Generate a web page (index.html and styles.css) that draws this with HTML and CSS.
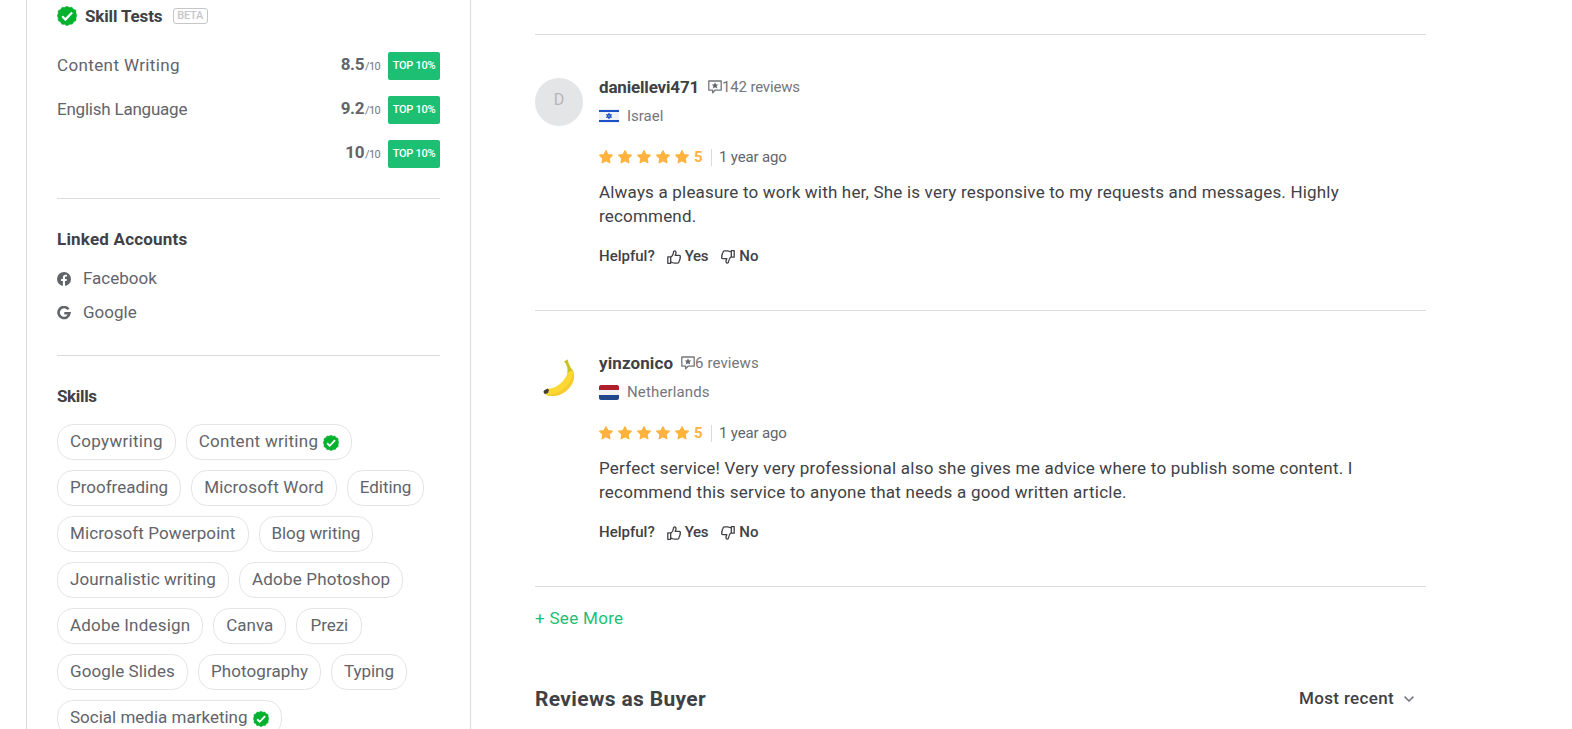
FILE: index.html
```html
<!DOCTYPE html>
<html>
  <head>
    <meta charset="utf-8" />
    <title>Seller Profile</title>
    <link rel="stylesheet" href="styles.css">
  </head>

  <body>
    <svg class="defs">
      <symbol id="verified" viewBox="0 0 20 20">
        <path fill="#00b22d" stroke="#00b22d" stroke-width=".6" stroke-linejoin="round" d="M10 .3l2.300 1.200 2.600-.3 1.500 2.100 2.400 1 .1 2.600L19.700 9.600l-.8 2.300.1 2.600-2.300 1.300-1.300 2.300-2.600.1L10 19.700l-2.400-1.500-2.700.1-1.300-2.400-2.400-1.300.1-2.600L.3 9.700l1-2.400-.1-2.600 2.400-1.200L5 1.400l2.600.1z"/>
        <path fill="none" stroke="#fff" stroke-width="2.300" d="M5.200 10.300l3.200 3.200 6.700-7"/>
      </symbol>
      <symbol id="star" viewBox="0 0 14 14">
        <path fill="#ffb33e" stroke="#ffb33e" stroke-width="1.200" stroke-linejoin="round" d="M7 .7l1.900 3.900 4.400.6-3.200 3.100.8 4.500L7 10.700l-3.900 2.100.8-4.500L.7 5.200l4.400-.6z"/>
      </symbol>
      <symbol id="bubble" viewBox="0 0 14 14">
        <path fill="none" stroke="#74767e" stroke-width="1.300" stroke-linejoin="round" d="M.8 1h12.400v9.200H7l-2.400 2.600v-2.600H.8z"/>
        <path fill="#62646a" d="M7 2.200l1 2.200 2.400.2-1.800 1.500.6 2.400L7 7.200 4.800 8.500l.6-2.400-1.800-1.500 2.400-.2z"/>
      </symbol>
      <symbol id="thumb" viewBox="0 0 14 14">
        <path fill="none" stroke="#404145" stroke-width="1.300" stroke-linejoin="round" d="M.8 6.800h2.900v6.500H.8zM3.700 7.400C5.500 6 6.300 4.600 6.500 2.200c.1-1.800 2.400-1.700 2.500.2 0 1.200-.3 2-.8 3h3.900c1.300 0 1.500 1.200.9 1.900.5.8.3 1.500-.3 2 .2.900-.1 1.500-.7 1.900.1 1.200-.5 1.900-1.600 1.900H7.600c-1.500 0-2.400-.7-3.900-1.100z"/>
      </symbol>
    </svg>

    <div class="page">
      <div class="sidebar">
        <div class="section tests">
          <h3 class="title">
            <svg class="badge"><use href="#verified"/></svg>
            <span>Skill Tests</span>
            <span class="beta">BETA</span>
          </h3>
          <div class="test"><span class="name cw">Content Writing</span><b>8.5</b><small>/10</small><span class="top">TOP 10%</span></div>
          <div class="test"><span class="name el">English Language</span><b>9.2</b><small>/10</small><span class="top">TOP 10%</span></div>
          <div class="test"><span class="name"></span><b>10</b><small>/10</small><span class="top">TOP 10%</span></div>
        </div>

        <div class="section accounts">
          <h3 class="title">Linked Accounts</h3>
          <div class="account">
            <svg viewBox="0 0 14 14">
              <circle cx="7" cy="7" r="7" fill="#62646a"/>
              <path fill="#fff" d="M5.900 14V9H4.100V7h1.800V5.500c0-1.800 1-2.800 2.700-2.800.7 0 1.400.1 1.400.1v1.600h-.9c-.8 0-1.100.5-1.100 1.100V7h1.900l-.3 2H8v5z"/>
            </svg>
            <span>Facebook</span>
          </div>
          <div class="account">
            <svg viewBox="0 0 14 14">
              <path fill="none" stroke="#62646a" stroke-width="2.600" d="M11.500 3.300A5.500 5.500 0 1 0 12.500 7.200H7.300"/>
            </svg>
            <span>Google</span>
          </div>
        </div>

        <div class="section">
          <h3 class="title skills-title">Skills</h3>
          <div class="skills">
            <span class="pill wide">Copywriting</span>
            <span class="pill wide">Content writing<svg class="check"><use href="#verified"/></svg></span>
            <span class="pill tight">Proofreading</span>
            <span class="pill mid">Microsoft Word</span>
            <span class="pill tighter">Editing</span>
            <span class="pill">Microsoft Powerpoint</span>
            <span class="pill tighter">Blog writing</span>
            <span class="pill">Journalistic writing</span>
            <span class="pill mid">Adobe Photoshop</span>
            <span class="pill mid">Adobe Indesign</span>
            <span class="pill tight">Canva</span>
            <span class="pill tighter">Prezi</span>
            <span class="pill">Google Slides</span>
            <span class="pill">Photography</span>
            <span class="pill tighter">Typing</span>
            <span class="pill tight">Social media marketing<svg class="check"><use href="#verified"/></svg></span>
          </div>
        </div>
      </div>

      <div class="main">
        <div class="review">
          <div class="avatar letter">D</div>
          <div class="body">
            <div class="user">
              <b class="daniel">daniellevi471</b>
              <svg><use href="#bubble"/></svg>
              <span>142 reviews</span>
            </div>
            <div class="country">
              <svg class="flag" viewBox="0 0 20 14">
                <path fill="#eef1f6" d="M0 0h20v14H0z"/>
                <path fill="#1c4fc4" d="M0 1h20v2H0zM0 11h20v2H0z"/>
                <path fill="none" stroke="#1c4fc4" stroke-width="1.200" d="M10 4.600l2.100 3.600H7.900zM10 9.400L7.900 5.800h4.200z"/>
              </svg>
              <span>Israel</span>
            </div>
            <div class="rating">
              <svg><use href="#star"/></svg>
              <svg><use href="#star"/></svg>
              <svg><use href="#star"/></svg>
              <svg><use href="#star"/></svg>
              <svg><use href="#star"/></svg>
              <b>5</b>
              <span class="time">1 year ago</span>
            </div>
            <p class="first">Always a pleasure to work with her, She is very responsive to my requests and messages. Highly recommend.</p>
            <div class="helpful">
              <span class="ask">Helpful?</span>
              <svg><use href="#thumb"/></svg><span class="yes">Yes</span>
              <svg class="down"><use href="#thumb"/></svg><span>No</span>
            </div>
          </div>
        </div>

        <div class="review">
          <svg class="avatar" viewBox="0 0 48 48">
            <path fill="#fdd835" d="M33 15.500c2-.5 4-.3 5 1 2.500 5 1 11.500-3 16.500-5 6-11 9-17.500 9-3.500 0-6.500-.8-8-2.300l3-5C18 35 24 31.500 28 27c3-3.500 4.500-7 5-11.500z"/>
            <path fill="#f6cb2f" d="M38.300 18c1.600 4.500.2 10.500-3.300 15-5 6-11 9-17.500 9-2.500 0-4.500-.4-6-1.100C22 40.500 35.500 34 38.300 18z"/>
            <path fill="#c9c41d" d="M29 7.300l3.800-1.800c.4 4 2 7 5.500 11.800l-2.200-.5-3.600 2.200c.5-5-.8-8.500-3.500-11.700z"/>
            <path fill="#443d38" d="M9 36.500l3.500-2 1.500 1.500-1 2.900-3.200 1c-1.300-.9-1.500-2.400-.8-3.400z"/>
          </svg>
          <div class="body">
            <div class="user">
              <b class="yin">yinzonico</b>
              <svg><use href="#bubble"/></svg>
              <span class="six">6 reviews</span>
            </div>
            <div class="country nl">
              <svg class="flag" viewBox="0 0 20 15">
                <path fill="#ae1f2b" d="M0 0h20v5H0z"/>
                <path fill="#f0f2f5" d="M0 5h20v5H0z"/>
                <path fill="#21468b" d="M0 10h20v5H0z"/>
              </svg>
              <span>Netherlands</span>
            </div>
            <div class="rating">
              <svg><use href="#star"/></svg>
              <svg><use href="#star"/></svg>
              <svg><use href="#star"/></svg>
              <svg><use href="#star"/></svg>
              <svg><use href="#star"/></svg>
              <b>5</b>
              <span class="time">1 year ago</span>
            </div>
            <p>Perfect service! Very very professional also she gives me advice where to publish some content. I recommend this service to anyone that needs a good written article.</p>
            <div class="helpful">
              <span class="ask">Helpful?</span>
              <svg><use href="#thumb"/></svg><span class="yes">Yes</span>
              <svg class="down"><use href="#thumb"/></svg><span>No</span>
            </div>
          </div>
        </div>

        <div class="more">+ See More</div>
        <div class="buyer">
          <h2>Reviews as Buyer</h2>
          <div class="sort">
            <span>Most recent</span>
            <svg viewBox="0 0 10 6"><path fill="none" stroke="#74767e" stroke-width="1.500" d="M.6.6L5 5 9.400.6"/></svg>
          </div>
        </div>
      </div>
    </div>
  </body>
</html>
```
FILE: styles.css
```css
* {
  box-sizing: border-box;
}

body {
  margin: 0;
  height: 729px;
  overflow: hidden;
  background: #fff;
  color: #62646a;
  font: 17px/24px Roboto, sans-serif;
}

svg {
  display: block;
  flex: none;
}

.defs {
  display: none;
}

.page {
  display: flex;
  gap: 64px;
  height: 729px;
  padding-left: 26px;
  overflow: hidden;
}

/* left column */
.sidebar {
  flex: none;
  width: 445px;
  padding: 0 30px;
  border: solid #dadbdd;
  border-width: 0 1px;
}

.section {
  border-bottom: 1px solid #dadbdd;
}

.section:last-child {
  border-bottom: 0;
}

.tests {
  height: 199px;
  padding-top: 4px;
}

.title {
  display: flex;
  align-items: center;
  margin: 0;
  color: #404145;
  font-size: 17px;
  line-height: 24px;
  letter-spacing: 0.2px;
}

.tests .title {
  height: 24px;
  margin-bottom: 24px;
  line-height: 22px;
  letter-spacing: -0.15px;
}

.tests .title span {
  margin-top: -1px;
}

.badge {
  width: 20px;
  height: 20px;
  margin-right: 8px;
}

.title .beta {
  height: 16px;
  margin-top: 0;
  margin-left: 11px;
  padding: 0 4px 0 3px;
  border: 1px solid #c5c6c9;
  border-radius: 3px;
  color: #c5c6c9;
  font-size: 11px;
  font-weight: 500;
  line-height: 14px;
  letter-spacing: -0.3px;
}

.test {
  display: flex;
  height: 28px;
  margin-bottom: 16px;
  line-height: 27px;
}

.name {
  flex: 1;
}

.cw {
  letter-spacing: 0.38px;
}

.el {
  letter-spacing: -0.22px;
}

.test b {
  line-height: 25px;
  letter-spacing: -0.4px;
}

.test small {
  width: 24px;
  padding-left: 1px;
  color: #74767e;
  font-size: 11px;
  line-height: 29px;
  letter-spacing: -0.6px;
}

.top {
  width: 52px;
  border-radius: 2px;
  background: #1dbf73;
  color: #fff;
  font-size: 11px;
  font-weight: 500;
  text-align: center;
  letter-spacing: -0.3px;
}

.accounts {
  height: 157px;
  padding-top: 28px;
}

.accounts .title {
  margin-bottom: 15px;
}

.account {
  display: flex;
  align-items: center;
  gap: 12px;
  height: 24px;
  margin-bottom: 10px;
}

.account svg {
  width: 14px;
  height: 14px;
  margin-top: 2px;
}

.skills-title {
  margin: 28px 0 16px;
  letter-spacing: -0.35px;
}

.skills {
  display: flex;
  flex-wrap: wrap;
  gap: 10px;
}

.pill {
  display: flex;
  align-items: center;
  justify-content: center;
  height: 36px;
  min-width: 66px;
  padding: 0 12px;
  padding-bottom: 2px;
  border: 1px solid #e4e5e7;
  border-radius: 16px;
  letter-spacing: 0.1px;
}

.wide {
  letter-spacing: 0.29px;
}

.mid {
  letter-spacing: 0.19px;
}

.tight {
  letter-spacing: 0;
}

.tighter {
  letter-spacing: -0.06px;
}

.check {
  width: 16px;
  height: 16px;
  margin: 4px 0 0 5px;
}

/* reviews */
.main {
  width: 891px;
  padding-top: 34px;
}

.review {
  display: flex;
  gap: 16px;
  height: 276px;
  padding-top: 43px;
  border-top: 1px solid #dadbdd;
}

.avatar {
  flex: none;
  width: 48px;
  height: 48px;
}

.letter {
  border-radius: 50%;
  background: #e4e5e7;
  color: #b5b6ba;
  font-size: 16px;
  line-height: 44px;
  text-align: center;
}

.user {
  display: flex;
  align-items: center;
  height: 18px;
  color: #74767e;
  font-size: 15px;
  letter-spacing: -0.18px;
}

.user b {
  margin: -1px 9px 0 0;
  color: #404145;
  font-size: 17px;
  letter-spacing: -0.17px;
}

.user .yin {
  margin-right: 8px;
  letter-spacing: 0.1px;
}

.user .six {
  letter-spacing: 0.1px;
}

.user svg {
  width: 14px;
  height: 14px;
}

.country {
  display: flex;
  align-items: center;
  gap: 8px;
  height: 22px;
  margin-top: 9px;
  color: #74767e;
  font-size: 15px;
  letter-spacing: 0;
}

.nl {
  letter-spacing: 0.14px;
}

.flag {
  width: 20px;
  height: 14px;
}

.nl .flag {
  height: 15px;
  border-radius: 2px;
}

.rating {
  display: flex;
  align-items: center;
  gap: 5px;
  height: 18px;
  margin-top: 21px;
  font-size: 15px;
}

.rating svg {
  width: 14px;
  height: 14px;
  overflow: visible;
}

.rating b {
  width: 12px;
  color: #ffb33e;
}

.time {
  padding-left: 7px;
  border-left: 1px solid #dadbdd;
  line-height: 17px;
  letter-spacing: -0.15px;
}

.body p {
  width: 770px;
  margin: 14px 0 0;
  color: #404145;
  letter-spacing: 0.235px;
}

.body .first {
  letter-spacing: 0.19px;
}

.helpful {
  display: flex;
  align-items: center;
  height: 20px;
  margin-top: 18px;
  color: #404145;
  font-size: 15px;
  font-weight: 500;
  letter-spacing: 0;
}

.helpful svg {
  width: 14px;
  height: 14px;
  margin: 2px 4px 0 0;
}

.ask {
  margin-right: 12px;
}

.yes {
  margin-right: 13px;
  letter-spacing: -0.3px;
}

.helpful .down {
  transform: rotate(180deg);
}

.more {
  padding-top: 19px;
  border-top: 1px solid #dadbdd;
  color: #1dbf73;
  letter-spacing: 0.3px;
}

.buyer {
  display: flex;
  align-items: center;
  justify-content: space-between;
  margin-top: 57px;
  padding-right: 12px;
  color: #404145;
}

h2 {
  margin: 0;
  font-size: 21px;
  line-height: 24px;
  letter-spacing: 0.35px;
}

.sort {
  display: flex;
  align-items: center;
  gap: 10px;
  font-weight: 500;
  letter-spacing: 0.34px;
}

.sort span {
  margin-top: -2px;
}

.sort svg {
  width: 10px;
  height: 6px;
}
```
